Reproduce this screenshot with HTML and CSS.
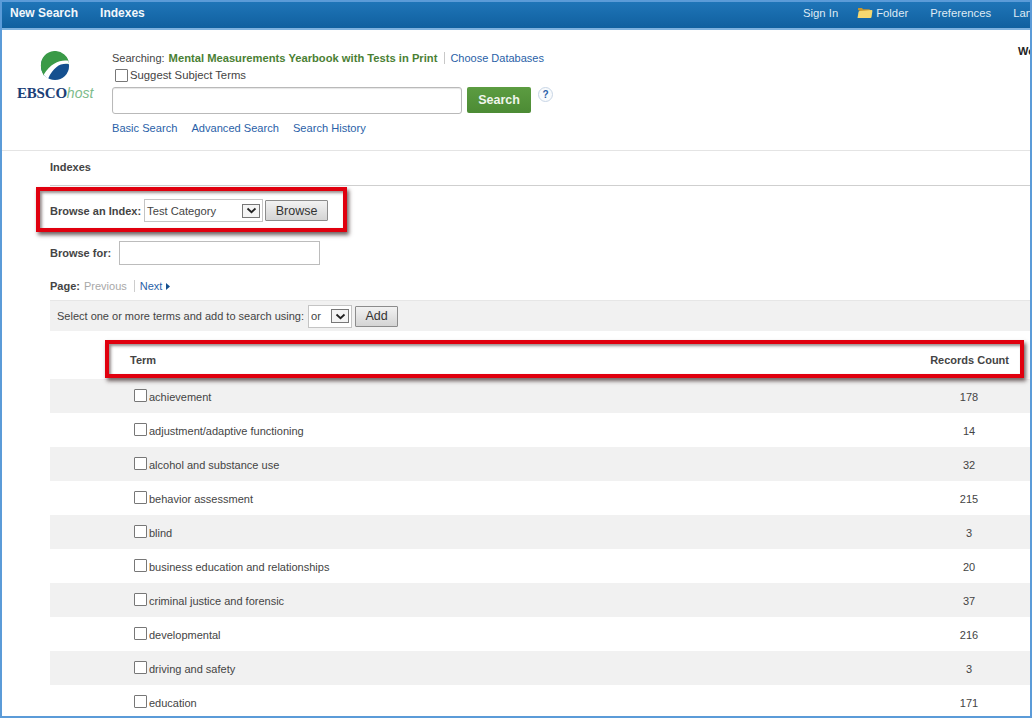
FILE: index.html
```html
<!DOCTYPE html>
<html lang="en">
<head>
<meta charset="utf-8">
<title>EBSCOhost Indexes</title>
<link rel="stylesheet" href="styles.css">
</head>
<body>
<div class="frame">
  <nav class="toolbar">
    <a class="tool-main tool-new">New Search</a>
    <a class="tool-main">Indexes</a>
    <div class="tool-right">
      <a class="tool-link tool-signin">Sign In</a>
      <a class="tool-link tool-folder">
        <svg class="folder-icon" width="16" height="12" viewBox="0 0 16 12"><path d="M1 3 L1 1.5 Q1 1 1.5 1 L5 1 L6 2.2 L12 2.2 Q13 2.2 13 3 L13 4 L3 4 Z" fill="#c9962a"/><path d="M0.5 11 L1.5 5 Q1.7 4 2.8 4 L14.5 3 Q15.6 3 15.4 4 L14.5 10.2 Q14.3 11 13.4 11 Z" fill="#f6d870"/></svg>Folder</a>
      <a class="tool-link tool-prefs">Preferences</a>
      <a class="tool-link">Languages</a>
    </div>
  </nav>

  <header class="header">
    <div class="logo">
      <svg class="logo-mark" width="30" height="30" viewBox="0 0 32 32">
        <circle cx="16" cy="16" r="15" fill="#14508f"/>
        <path d="M1 16 A15 15 0 0 1 31 14 C24 12 14 13 4 26 C2.4 23 1 19.6 1 16 Z" fill="#3a9a47"/>
        <path d="M4 25 C12 12.5 22 9 30.4 10.5 L31 14 C22 12.6 15 16.5 8.6 29.5 C6.9 28.2 5.2 26.6 4 25 Z" fill="#fff"/>
      </svg>
      <div class="logo-text"><span class="logo-ebsco">EBSCO</span><span class="logo-host">host</span></div>
    </div>
    <div class="search">
      <div class="search-line">
        <span>Searching:</span>
        <strong class="db-name">Mental Measurements Yearbook with Tests in Print</strong>
        <a class="link db-choose">Choose Databases</a>
      </div>
      <label class="suggest"><input class="check" type="checkbox">Suggest Subject Terms</label>
      <div class="search-row">
        <input class="search-input" type="text">
        <button class="search-btn" type="button">Search</button>
        <span class="help">?</span>
      </div>
      <div class="search-links">
        <a class="link">Basic Search</a>
        <a class="link">Advanced Search</a>
        <a class="link">Search History</a>
      </div>
    </div>
    <strong class="welcome">Welcome</strong>
  </header>

  <main class="content">
    <h1 class="title">Indexes</h1>
    <div class="browse-row">
      <strong class="browse-label">Browse an Index:</strong>
      <div class="fake-select select-wide"><span>Test Category</span><span class="arrow"><svg width="11" height="7" viewBox="0 0 11 7"><path d="M1.5 1.5 L5.5 5.2 L9.5 1.5" fill="none" stroke="#222" stroke-width="1.8"/></svg></span></div>
      <button class="btn btn-browse" type="button">Browse</button>
    </div>
    <div class="for-row">
      <strong>Browse for:</strong>
      <input class="for-input" type="text">
    </div>
    <div class="pager">
      <strong>Page:</strong>
      <span class="prev">Previous</span>
      <a class="link next">Next<svg class="next-tri" width="4" height="7" viewBox="0 0 4 7"><path d="M0 0 L4 3.5 L0 7 Z" fill="#14508f"/></svg></a>
    </div>
    <div class="add-bar">
      <span>Select one or more terms and add to search using:</span>
      <div class="fake-select select-small"><span>or</span><span class="arrow"><svg width="11" height="7" viewBox="0 0 11 7"><path d="M1.5 1.5 L5.5 5.2 L9.5 1.5" fill="none" stroke="#222" stroke-width="1.8"/></svg></span></div>
      <button class="btn btn-add" type="button">Add</button>
    </div>
    <div class="table-head"><strong>Term</strong><strong>Records Count</strong></div>
    <div class="row"><label class="term"><input class="check" type="checkbox">achievement</label><span class="count">178</span></div>
    <div class="row"><label class="term"><input class="check" type="checkbox">adjustment/adaptive functioning</label><span class="count">14</span></div>
    <div class="row"><label class="term"><input class="check" type="checkbox">alcohol and substance use</label><span class="count">32</span></div>
    <div class="row"><label class="term"><input class="check" type="checkbox">behavior assessment</label><span class="count">215</span></div>
    <div class="row"><label class="term"><input class="check" type="checkbox">blind</label><span class="count">3</span></div>
    <div class="row"><label class="term"><input class="check" type="checkbox">business education and relationships</label><span class="count">20</span></div>
    <div class="row"><label class="term"><input class="check" type="checkbox">criminal justice and forensic</label><span class="count">37</span></div>
    <div class="row"><label class="term"><input class="check" type="checkbox">developmental</label><span class="count">216</span></div>
    <div class="row"><label class="term"><input class="check" type="checkbox">driving and safety</label><span class="count">3</span></div>
    <div class="row"><label class="term"><input class="check" type="checkbox">education</label><span class="count">171</span></div>
  </main>

  <div class="callout callout-browse"></div>
  <div class="callout callout-head"></div>
</div>
</body>
</html>
```
FILE: styles.css
```css
* { box-sizing: border-box; }
html, body { margin: 0; padding: 0; }
body {
  width: 1032px;
  height: 718px;
  overflow: hidden;
  background: #fff;
  font-family: "Liberation Sans", Arial, sans-serif;
  font-size: 11px;
  color: #444;
}
a { text-decoration: none; }
.frame {
  position: relative;
  width: 1032px;
  height: 718px;
  border: 2px solid #5b9bd8;
  overflow: hidden;
  background: #fff;
}
.toolbar {
  display: flex;
  align-items: center;
  height: 28px;
  padding: 0 0 4px 8px;
  background: linear-gradient(#1f75b8, #10609f);
  border-bottom: 2px solid #7fb2de;
  color: #fff;
  white-space: nowrap;
}
.tool-main { font-weight: bold; font-size: 12px; color: #f2f7fb; }
.tool-new { margin-right: 22px; }
.tool-right { display: flex; align-items: center; margin: 0 0 1px auto; flex: 0 0 auto; width: 227px; font-size: 11.3px; }
.tool-link { display: flex; align-items: center; color: #dfeaf4; flex: 0 0 auto; }
.tool-signin { margin-right: 19px; }
.tool-folder { margin-right: 22px; }
.tool-prefs { margin-right: 22px; }
.folder-icon { margin-right: 3px; }

.header {
  display: flex;
  height: 121px;
  border-bottom: 1px solid #e4e4e4;
  white-space: nowrap;
}
.logo { flex: 0 0 110px; padding: 21px 0 0 15px; }
.logo-mark { display: block; margin-left: 23px; }
.logo-text { margin-top: 3px; line-height: 18px; white-space: nowrap; }
.logo-ebsco { font-family: "Liberation Serif", serif; font-weight: bold; font-size: 15px; color: #1c3f77; letter-spacing: -0.2px; }
.logo-host { font-style: italic; font-size: 14px; color: #7dbb8b; }
.search { flex: 0 0 906px; padding-top: 21px; }
.search-line { display: flex; align-items: center; height: 14px; color: #444; }
.db-name { margin-left: 4px; font-size: 11.2px; color: #4a7f34; }
.db-choose { margin-left: 7px; padding-left: 5px; border-left: 1px solid #c8c8c8; }
.link { color: #2a5fa8; }
.suggest { display: flex; align-items: center; height: 16px; margin: 2px 0 0 3px; font-size: 11.3px; color: #444; }
.check {
  appearance: none;
  width: 13px;
  height: 13px;
  margin: 0 2px 0 0;
  border: 1px solid #777;
  border-radius: 1px;
  background: #fff;
  flex: 0 0 auto;
}
.search-row { display: flex; align-items: flex-start; margin-top: 4px; }
.search-input {
  width: 350px;
  height: 27px;
  margin: 0;
  border: 1px solid #b9b9b9;
  border-radius: 3px;
  box-shadow: inset 0 1px 1px #e6e6e6;
  background: #fff;
}
.search-btn {
  width: 64px;
  height: 26px;
  margin: 0 0 0 5px;
  padding: 0;
  border: 0;
  border-radius: 2px;
  background: linear-gradient(#5c9c41, #4c8b34);
  color: #f0f5ec;
  font: bold 12.5px "Liberation Sans", Arial, sans-serif;
}
.help {
  width: 15px;
  height: 15px;
  margin: 0 0 0 7px;
  border: 1px solid #c9d6e6;
  border-radius: 50%;
  color: #2a5fa8;
  background: #f8fafc;
  font-size: 10px;
  font-weight: bold;
  line-height: 13px;
  text-align: center;
}
.search-links { display: flex; gap: 14px; margin-top: 8px; font-size: 11.1px; }
.welcome { padding-top: 15px; color: #222; flex: 0 0 auto; font-size: 11px; }

.content { padding-left: 48px; white-space: nowrap; }
.title {
  height: 35px;
  margin: 0;
  border-bottom: 1px solid #cfcfcf;
  font-size: 11px;
  line-height: 32px;
  color: #444;
}
.browse-row { display: flex; align-items: center; height: 27px; margin-top: 11px; }
.browse-label { margin-right: 3px; }
.fake-select {
  display: flex;
  align-items: center;
  justify-content: space-between;
  height: 23px;
  padding: 0 2px;
  border: 1px solid #c4c4c4;
  background: #fff;
  color: #444;
  font-size: 11.2px;
}
.select-wide { width: 119px; }
.select-small { width: 44px; margin-left: 4px; }
.arrow {
  display: flex;
  align-items: center;
  justify-content: center;
  width: 18px;
  height: 14px;
  border: 1px solid #777;
  background: #f4f4f4;
}
.btn {
  height: 21px;
  margin: 0;
  padding: 0;
  border: 1px solid #8c8c8c;
  border-radius: 1px;
  background: linear-gradient(#f2f2f2, #d4d4d4);
  color: #333;
  font: 12.5px "Liberation Sans", Arial, sans-serif;
}
.btn-browse { width: 63px; margin-left: 2px; }
.btn-add { width: 43px; margin-left: 3px; }
.for-row { display: flex; align-items: center; gap: 8px; height: 25px; margin-top: 16px; }
.for-input { width: 201px; height: 24px; margin: 0; border: 1px solid #bcbcbc; background: #fff; }
.pager { display: flex; align-items: center; height: 14px; margin-top: 14px; }
.prev { margin-left: 4px; color: #a8a8a8; }
.next { display: flex; align-items: center; margin-left: 7px; padding-left: 5px; border-left: 1px solid #cdcdcd; }
.next-tri { margin-left: 4px; }
.add-bar {
  display: flex;
  align-items: center;
  height: 31px;
  margin-top: 7px;
  padding-left: 7px;
  background: #f1f1f1;
  border-top: 1px solid #e6e6e6;
  color: #444;
}
.table-head {
  display: flex;
  justify-content: space-between;
  align-items: center;
  height: 48px;
  padding: 10px 21px 0 80px;
  color: #444;
}
.row {
  display: flex;
  justify-content: space-between;
  height: 34px;
  padding: 10px 0 0 84px;
  color: #444;
}
.row:nth-child(even) { background: #fff; }
.row:nth-child(odd) { background: #f1f1f1; }
.term { display: flex; align-items: flex-start; line-height: 16px; }
.count { width: 122px; text-align: center; line-height: 16px; }

.callout {
  position: absolute;
  border: 4px solid #e0000e;
  box-shadow: 2px 3px 4px rgba(50, 30, 30, .7), inset 2px 2px 3px rgba(50, 30, 30, .5);
}
.callout-browse { left: 34px; top: 185px; width: 311px; height: 45px; }
.callout-head { left: 103px; top: 338px; width: 919px; height: 38px; }
```
